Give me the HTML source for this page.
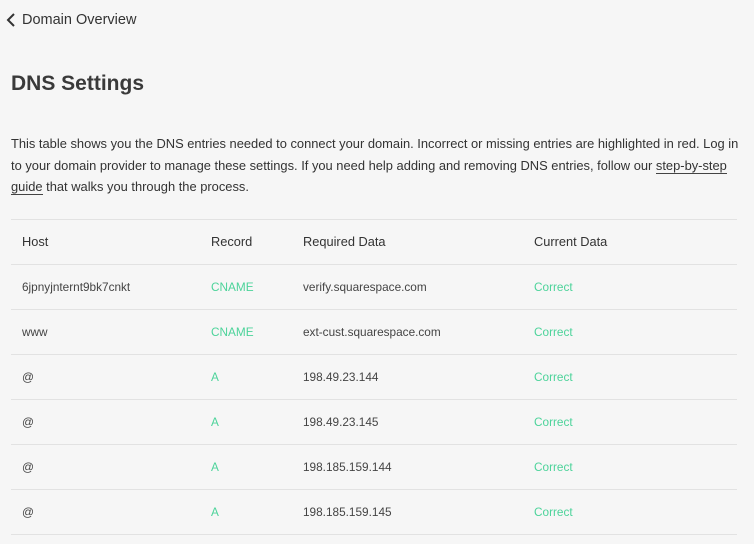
<!DOCTYPE html>
<html><head><meta charset="utf-8"><style>
html,body{margin:0;background:#f6f6f6;width:754px;height:544px;overflow:hidden}
body{font-family:"Liberation Sans",sans-serif;color:#3a3a3a;position:relative}
.back{position:absolute;left:6px;top:12px;font-size:14.5px;color:#333;display:flex;align-items:center}
.back svg{margin-right:6px}
h1{position:absolute;left:11px;top:72px;margin:0;font-size:21px;font-weight:bold;color:#3a3a3a}
p{position:absolute;left:11px;top:133px;width:740px;margin:0;font-size:12.9px;line-height:21.5px;color:#333;white-space:nowrap}
p u{text-decoration:none;border-bottom:1px solid #444}
.tbl{position:absolute;left:11px;top:219px;width:726px;border-bottom:1px solid #e2e2e2}
.row{height:44px;border-top:1px solid #e2e2e2;position:relative;font-size:11.8px;color:#444}
.row span{position:absolute;top:15px}
.h{font-size:12.8px;color:#333}
.h span{top:14px}
.g{color:#4cd39a}
</style></head><body>
<div class="back"><svg width="10" height="16" viewBox="0 0 10 16"><path d="M8 2L2 8l6 6" fill="none" stroke="#333" stroke-width="2"/></svg>Domain Overview</div>
<h1>DNS Settings</h1>
<p>This table shows you the DNS entries needed to connect your domain. Incorrect or missing entries are highlighted in red. Log in<br>to your domain provider to manage these settings. If you need help adding and removing DNS entries, follow our <u>step-by-step</u><br><u>guide</u> that walks you through the process.</p>
<div class="tbl">
<div class="row h"><span style="left:11px">Host</span><span style="left:200px">Record</span><span style="left:292px">Required Data</span><span style="left:523px">Current Data</span></div>
<div class="row"><span style="left:11px">6jpnyjnternt9bk7cnkt</span><span class="g" style="left:200px">CNAME</span><span style="left:292px">verify.squarespace.com</span><span class="g" style="left:523px">Correct</span></div>
<div class="row"><span style="left:11px">www</span><span class="g" style="left:200px">CNAME</span><span style="left:292px">ext-cust.squarespace.com</span><span class="g" style="left:523px">Correct</span></div>
<div class="row"><span style="left:11px">@</span><span class="g" style="left:200px">A</span><span style="left:292px">198.49.23.144</span><span class="g" style="left:523px">Correct</span></div>
<div class="row"><span style="left:11px">@</span><span class="g" style="left:200px">A</span><span style="left:292px">198.49.23.145</span><span class="g" style="left:523px">Correct</span></div>
<div class="row"><span style="left:11px">@</span><span class="g" style="left:200px">A</span><span style="left:292px">198.185.159.144</span><span class="g" style="left:523px">Correct</span></div>
<div class="row"><span style="left:11px">@</span><span class="g" style="left:200px">A</span><span style="left:292px">198.185.159.145</span><span class="g" style="left:523px">Correct</span></div>
</div>
</body></html>
